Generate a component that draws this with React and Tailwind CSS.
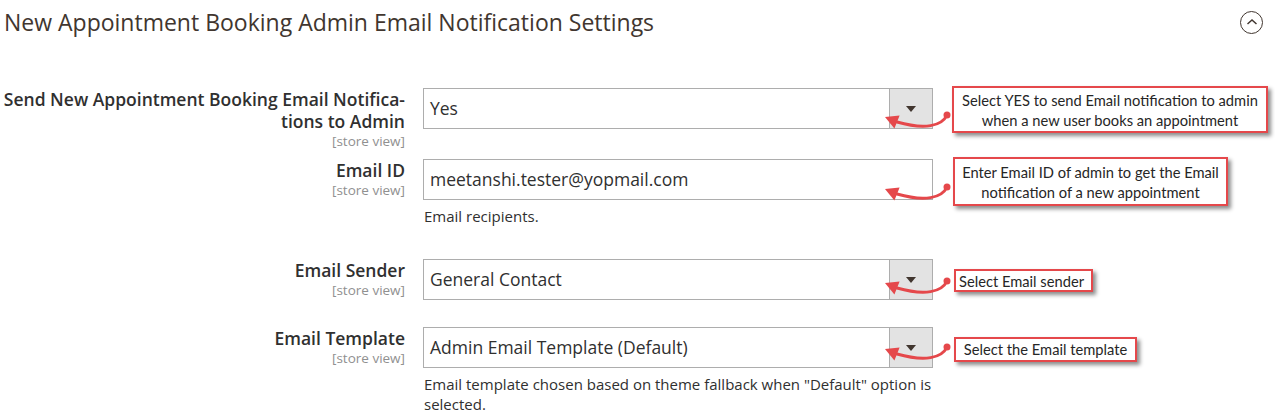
import React from 'react';

const openSans = { fontFamily: '"Open Sans", "Liberation Sans", sans-serif' };

const Callout = ({ children, className = '' }) => (
  <div
    className={`border-2 border-[#e5484b] bg-white text-[#262626] text-[14.7px] leading-[20px] text-center whitespace-nowrap shadow-[3px_3px_4px_rgba(0,0,0,0.45)] ${className}`}
    style={{ fontFamily: 'Lato, "Liberation Sans", sans-serif' }}
  >
    {children}
  </div>
);

const Arrow = ({ className = '' }) => (
  <svg
    className={`absolute left-[880px] ${className}`}
    width="72"
    height="26"
    viewBox="0 0 72 26"
    fill="none"
  >
    <path d="M67 5 C 62 16, 45 20, 17 12" stroke="#e5484b" strokeWidth="3" strokeLinecap="round" />
    <circle cx="67" cy="5" r="3.5" fill="#e5484b" />
    <polygon points="5,7 19.6,5.5 14.4,18.5" fill="#e5484b" />
  </svg>
);

const Label = ({ children, scope = '[store view]' }) => (
  <div className="w-[405px] shrink-0 text-right">
    <div className="text-[17.5px] leading-[22px] font-semibold text-[#303030] whitespace-nowrap">{children}</div>
    <div className="mt-[2px] text-[13.5px] leading-[14px] text-[#909090]">{scope}</div>
  </div>
);

const SelectBox = ({ value }) => (
  <div className="flex h-[41px] w-[510px] border border-[#adadad] bg-white">
    <div className="flex-1 flex items-center pl-[6px] text-[17.5px] text-[#303030]">{value}</div>
    <div className="w-[43px] flex items-center justify-center bg-[#e3e3e3] border-l border-[#adadad]">
      <div className="w-0 h-0 border-l-[5px] border-r-[5px] border-t-[6px] border-l-transparent border-r-transparent border-t-[#41362f]" />
    </div>
  </div>
);

export default function App() {
  return (
    <div className="w-[1275px] h-[419px] bg-white overflow-hidden" style={openSans}>
      <div className="flex items-center justify-between pl-[4px] pr-[12px] h-[44px]">
        <h2 className="text-[23px] text-[#41362f] font-normal leading-[28px] whitespace-nowrap">
          New Appointment Booking Admin Email Notification Settings
        </h2>
        <div className="w-[23px] h-[23px] rounded-full border-[1.5px] border-[#41362f] flex items-center justify-center">
          <svg width="12" height="8" viewBox="0 0 12 8" fill="none">
            <path d="M1.5 6 L6 2 L10.5 6" stroke="#41362f" strokeWidth="1.5" />
          </svg>
        </div>
      </div>

      {/* Row 1 */}
      <div className="relative flex items-start mt-[44px]">
        <Label>
          Send New Appointment Booking Email Notifica-
          <br />
          tions to Admin
        </Label>
        <div className="ml-[18px]">
          <SelectBox value="Yes" />
        </div>
        <Callout className="ml-[19px] -mt-[2px] w-[316px] h-[47px] pt-[2px]">
          Select YES to send Email notification to admin
          <br />
          when a new user books an appointment
        </Callout>
        <Arrow className="top-[22px]" />
      </div>

      {/* Row 2 */}
      <div className="relative flex items-start mt-[11px]">
        <Label>Email ID</Label>
        <div className="ml-[18px] w-[510px]">
          <div className="h-[41px] border border-[#adadad] flex items-center pl-[6px] text-[17.5px] text-[#303030]">
            meetanshi.tester@yopmail.com
          </div>
          <div className="mt-[6px] text-[15px] leading-[20px] text-[#303030] pl-[1px]">Email recipients.</div>
        </div>
        <Callout className="ml-[20px] -mt-[2px] w-[275px] h-[49px] pt-[3px]">
          Enter Email ID of admin to get the Email
          <br />
          notification of a new appointment
        </Callout>
        <Arrow className="top-[23px]" />
      </div>

      {/* Row 3 */}
      <div className="relative flex items-start mt-[33px]">
        <Label>Email Sender</Label>
        <div className="ml-[18px]">
          <SelectBox value="General Contact" />
        </div>
        <Callout className="ml-[21px] mt-[10px] w-[139px] h-[23px] leading-[19px] !text-left pl-[3px]">
          Select Email sender
        </Callout>
        <Arrow className="top-[17px]" />
      </div>

      {/* Row 4 */}
      <div className="relative flex items-start mt-[27px]">
        <Label>Email Template</Label>
        <div className="ml-[18px] w-[510px]">
          <SelectBox value="Admin Email Template (Default)" />
          <div className="mt-[6px] text-[15px] leading-[20px] text-[#303030] pl-[1px] whitespace-nowrap">
            Email template chosen based on theme fallback when "Default" option is
            <br />
            selected.
          </div>
        </div>
        <Callout className="ml-[21px] mt-[10px] w-[183px] h-[25px] leading-[21px]">
          Select the Email template
        </Callout>
        <Arrow className="top-[15px]" />
      </div>
    </div>
  );
}
